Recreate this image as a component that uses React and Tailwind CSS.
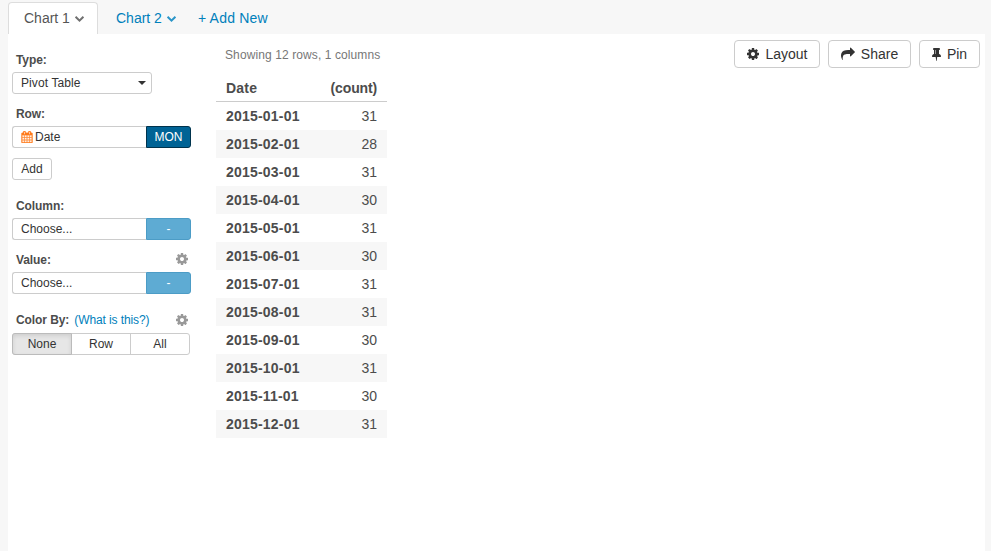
const ICONS = {
  calendar:
    'M192 1664h288v-288h-288v288zm352 0h320v-288h-320v288zm-352-352h288v-320h-288v320zm352 0h320v-320h-320v320zm-352-384h288v-288h-288v288zm736 736h320v-288h-320v288zm-384-736h320v-288h-320v288zm768 736h288v-288h-288v288zm-384-352h320v-320h-320v320zm-352-864v-288q0-13-9.5-22.5t-22.5-9.5h-64q-13 0-22.5 9.5t-9.5 22.5v288q0 13 9.5 22.5t22.5 9.5h64q13 0 22.5-9.5t9.5-22.5zm736 864h288v-320h-288v320zm-384-384h320v-288h-320v288zm384 0h288v-288h-288v288zm32-480v-288q0-13-9.5-22.5t-22.5-9.5h-64q-13 0-22.5 9.5t-9.5 22.5v288q0 13 9.5 22.5t22.5 9.5h64q13 0 22.5-9.5t9.5-22.5zm384-64v1280q0 52-38 90t-90 38h-1408q-52 0-90-38t-38-90v-1280q0-52 38-90t90-38h128v-96q0-66 47-113t113-47h64q66 0 113 47t47 113v96h384v-96q0-66 47-113t113-47h64q66 0 113 47t47 113v96h128q52 0 90 38t38 90z',
  cog: 'M1152 896q0-106-75-181t-181-75-181 75-75 181 75 181 181 75 181-75 75-181zm512-109v222q0 12-8 23t-20 13l-185 28q-19 54-39 91 35 50 107 138 10 12 10 25t-9 23q-27 37-99 108t-94 71q-12 0-26-9l-138-108q-44 23-91 38-16 136-29 186-7 28-36 28h-222q-14 0-24.5-8.5t-11.5-21.5l-28-184q-49-16-90-37l-141 107q-10 9-25 9-14 0-25-11-126-114-165-168-7-10-7-23 0-12 8-23 15-21 51-66.5t54-70.5q-27-50-41-99l-183-27q-13-2-21-12.5t-8-23.5v-222q0-12 8-23t19-13l186-28q14-46 39-92-40-57-107-138-10-12-10-24 0-10 9-23 26-36 98.5-107.5t94.5-71.5q13 0 26 10l138 107q44-23 91-38 16-136 29-186 7-28 36-28h222q14 0 24.5 8.5t11.5 21.5l28 184q49 16 90 37l142-107q9-9 24-9 13 0 25 10 129 119 165 170 7 8 7 22 0 12-8 23-15 21-51 66.5t-54 70.5q26 50 41 98l183 28q13 2 21 12.5t8 23.5z',
  share:
    'M1792 640q0 26-19 45l-512 512q-19 19-45 19t-45-19-19-45v-256h-224q-98 0-175.5 6t-154 21.5-133 42.5-105.5 69.5-80 101-48.5 138.5-17.5 181q0 55 5 123 0 6 2.5 23.5t2.5 26.5q0 15-8.5 25t-23.5 10q-16 0-28-17-7-9-13-22t-13.5-30-10.5-24q-127-285-127-451 0-199 53-333 162-403 875-403h224v-256q0-26 19-45t45-19 45 19l512 512q19 19 19 45z',
  pin: 'M800 864v-448q0-14-9-23t-23-9-23 9-9 23v448q0 14 9 23t23 9 23-9 9-23zm672 352q0 26-19 45t-45 19h-429l-51 483q-2 12-10.5 20.5t-20.5 8.5h-1q-27 0-32-27l-76-485h-404q-26 0-45-19t-19-45q0-123 78.5-221.5t177.5-98.5v-512q-52 0-90-38t-38-90 38-90 90-38h640q52 0 90 38t38 90-38 90-90 38v512q99 0 177.5 98.5t78.5 221.5z',
  chevron:
    'M1683 808l-742 741q-19 19-45 19t-45-19l-742-741q-19-19-19-45.5t19-45.5l166-165q19-19 45-19t45 19l531 531 531-531q19-19 45-19t45 19l166 165q19 19 19 45.5t-19 45.5z',
};

function Icon({ name, className, viewBox = '0 0 1792 1792' }) {
  return (
    <svg viewBox={viewBox} fill="currentColor" className={`shrink-0 ${className}`}>
      <path d={ICONS[name]} />
    </svg>
  );
}

function Chevron({ className }) {
  return (
    <Icon
      name="chevron"
      viewBox="90 533 1612 1035"
      className={`mt-[2px] h-[6px] w-[9px] ${className}`}
    />
  );
}

function Label({ children, gear }) {
  return (
    <div className="flex h-4 w-[177px] items-center pl-1 font-bold tracking-[-0.08px] text-[#4c4c4c]">
      {children}
      {gear && <Icon name="cog" className={`ml-auto size-[14px] text-[#999] ${gear}`} />}
    </div>
  );
}

function Field({ children, action, active }) {
  return (
    <div className="flex h-[22px] w-[179px]">
      <div className="flex w-[134px] items-center rounded-l-[3px] border border-r-0 border-[#ccc] pl-2">
        {children}
      </div>
      <div
        className={`flex w-[45px] items-center justify-center rounded-r-[3px] border text-white ${
          active ? 'border-[#00334d] bg-[#006395]' : 'border-[#4c9cc6] bg-[#5eabd3]'
        }`}
      >
        {action}
      </div>
    </div>
  );
}

function ToolButton({ icon, width, children }) {
  return (
    <button
      className={`flex h-7 items-center justify-center rounded-[4px] border border-[#ccc] bg-white text-sm text-[#333] ${width}`}
    >
      {icon}
      {children}
    </button>
  );
}

const ROWS = [
  ['2015-01-01', 31],
  ['2015-02-01', 28],
  ['2015-03-01', 31],
  ['2015-04-01', 30],
  ['2015-05-01', 31],
  ['2015-06-01', 30],
  ['2015-07-01', 31],
  ['2015-08-01', 31],
  ['2015-09-01', 30],
  ['2015-10-01', 31],
  ['2015-11-01', 30],
  ['2015-12-01', 31],
];

export default function App() {
  return (
    <div className="flex h-[551px] w-[991px] flex-col overflow-hidden bg-[#f7f7f7] pl-2 pr-[6px] font-['Helvetica_Neue','Liberation_Sans',Arial,sans-serif] text-xs text-[#333]">
      <nav className="flex h-[34px] shrink-0 pt-[2px] text-sm text-[#0080bb]">
        <div className="flex h-8 w-[90px] items-center gap-[5px] rounded-t-[4px] border border-b-0 border-[#ddd] bg-white pb-px pl-[15px] text-[#555]">
          Chart 1
          <Chevron className="text-[#707070]" />
        </div>
        <div className="ml-[18px] flex items-center gap-[5px]">
          Chart 2
          <Chevron className="text-[#2a95c8]" />
        </div>
        <div className="ml-[22px] flex items-center tracking-[0.2px]">+ Add New</div>
      </nav>

      <main className="flex flex-1 bg-white pl-1">
        <aside className="w-[204px] pt-[18px]">
          <Label>Type:</Label>
          <div className="mt-1 flex h-[22px] w-[140px] items-center justify-between rounded-[3px] border border-[#ccc] pl-2 pr-[5px] tracking-[0.1px]">
            Pivot Table
            <span className="border-x-4 border-t-4 border-x-transparent border-t-[#333]" />
          </div>

          <div className="mt-3">
            <Label>Row:</Label>
          </div>
          <div className="mt-1">
            <Field action="MON" active>
              <Icon name="calendar" className="mr-[2px] size-3 stroke-current stroke-[40] text-[#ff7a1a]" />
              Date
            </Field>
          </div>
          <button className="mt-[10px] flex h-[22px] w-10 items-center justify-center rounded-[3px] border border-[#ccc]">
            Add
          </button>

          <div className="mt-[18px]">
            <Label>Column:</Label>
          </div>
          <div className="mt-1">
            <Field action="-">Choose...</Field>
          </div>

          <div className="mt-3">
            <Label gear="mb-[2px]">Value:</Label>
          </div>
          <div className="mt-1">
            <Field action="-">Choose...</Field>
          </div>

          <div className="mt-[18px]">
            <Label gear="mb-0">
              Color By:
              <span className="ml-[5px] font-normal tracking-[-0.1px] text-[#0080bb]">(What is this?)</span>
            </Label>
          </div>
          <div className="mt-[5px] flex h-[22px] w-[178px] rounded-[3px] border border-[#ccc]">
            <div className="-my-px -ml-px flex w-[60px] items-center justify-center rounded-l-[3px] border border-[#bbb] bg-[#e6e6e6] shadow-[inset_0_2px_4px_rgba(0,0,0,0.1)]">
              None
            </div>
            <div className="flex w-[59px] items-center justify-center border-r border-[#ccc]">Row</div>
            <div className="flex flex-1 items-center justify-center">All</div>
          </div>
        </aside>

        <section className="w-[171px] pt-[13px]">
          <p className="h-4 whitespace-nowrap pl-[9px] text-xs leading-4 tracking-[0.1px] text-[#777]">
            Showing 12 rows, 1 columns
          </p>
          <div className="mt-3 flex h-[27px] items-center justify-between border-b border-[#ccc] px-[10px] text-sm font-bold text-[#4c4c4c]">
            <span className="tracking-[0.2px]">Date</span>
            <span className="tracking-[-0.15px]">(count)</span>
          </div>
          <table className="w-full border-collapse text-sm text-[#4c4c4c]">
            <tbody>
              {ROWS.map(([date, count]) => (
                <tr key={date} className="h-7 even:bg-[#f7f7f7]">
                  <th className="p-0 pl-[10px] text-left tracking-[0.2px]">{date}</th>
                  <td className="p-0 pr-[10px] text-right">{count}</td>
                </tr>
              ))}
            </tbody>
          </table>
        </section>

        <div className="ml-auto flex gap-2 pr-[5px] pt-[6px]">
          <ToolButton width="w-[86px]" icon={<Icon name="cog" className="mr-[5px] size-[14px]" />}>
            Layout
          </ToolButton>
          <ToolButton width="w-[83px]" icon={<Icon name="share" className="mr-[6px] size-[14px]" />}>
            Share
          </ToolButton>
          <ToolButton
            width="w-[61px]"
            icon={<Icon name="pin" viewBox="320 128 1152 1664" className="mr-[6px] h-[13px] w-[9px]" />}
          >
            Pin
          </ToolButton>
        </div>
      </main>
    </div>
  );
}
